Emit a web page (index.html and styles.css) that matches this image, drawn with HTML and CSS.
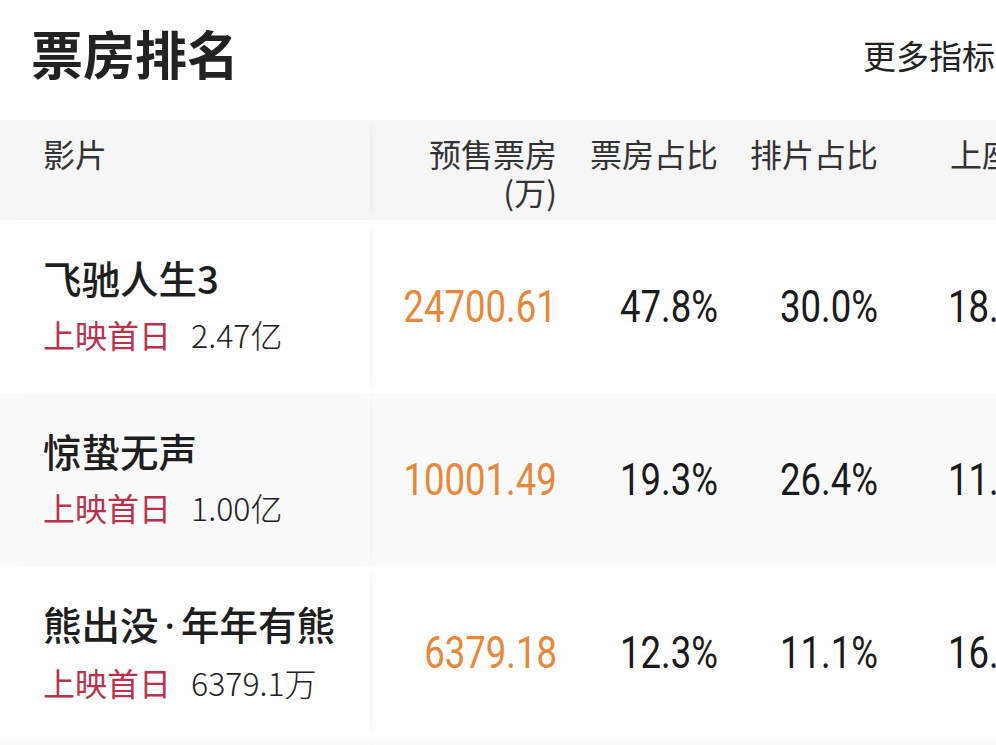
FILE: index.html
```html
<!DOCTYPE html>
<html lang="zh-CN">
<head>
<meta charset="utf-8">
<title>票房排名</title>
<link rel="stylesheet" href="styles.css">
</head>
<body>
<div class="page">
  <div class="topbar">
    <h1 class="title">票房排名</h1>
    <span class="more">更多指标 <span class="arrow">›</span></span>
  </div>
  <div class="table">
    <div class="row head">
      <div class="cell name">影片</div>
      <div class="cell num">预售票房<br>(万)</div>
      <div class="cell num">票房占比</div>
      <div class="cell num">排片占比</div>
      <div class="cell num">上座率</div>
    </div>
    <div class="row">
      <div class="cell name">
        <div class="film">飞驰人生3</div>
        <div class="sub"><span class="tag">上映首日</span><span class="val">2.47亿</span></div>
      </div>
      <div class="cell num digits orange"><span class="fig">24700.61</span></div>
      <div class="cell num digits"><span class="fig">47.8%</span></div>
      <div class="cell num digits"><span class="fig">30.0%</span></div>
      <div class="cell num digits"><span class="fig">18.5%</span></div>
    </div>
    <div class="row alt">
      <div class="cell name">
        <div class="film">惊蛰无声</div>
        <div class="sub"><span class="tag">上映首日</span><span class="val">1.00亿</span></div>
      </div>
      <div class="cell num digits orange"><span class="fig">10001.49</span></div>
      <div class="cell num digits"><span class="fig">19.3%</span></div>
      <div class="cell num digits"><span class="fig">26.4%</span></div>
      <div class="cell num digits"><span class="fig">11.2%</span></div>
    </div>
    <div class="row">
      <div class="cell name">
        <div class="film">熊出没<span class="dot">·</span>年年有熊</div>
        <div class="sub"><span class="tag">上映首日</span><span class="val">6379.1万</span></div>
      </div>
      <div class="cell num digits orange"><span class="fig">6379.18</span></div>
      <div class="cell num digits"><span class="fig">12.3%</span></div>
      <div class="cell num digits"><span class="fig">11.1%</span></div>
      <div class="cell num digits"><span class="fig">16.0%</span></div>
    </div>
    <div class="row alt">
      <div class="cell name"></div>
      <div class="cell num"></div>
      <div class="cell num"></div>
      <div class="cell num"></div>
      <div class="cell num"></div>
    </div>
  </div>
</div>
</body>
</html>
```
FILE: styles.css
```css
html, body {
  margin: 0;
  padding: 0;
  background: #ffffff;
  overflow: hidden;
}
body {
  width: 996px;
  height: 745px;
  font-family: "Noto Sans CJK SC", "Noto Sans", sans-serif;
  color: #1c1c1c;
}
.page {
  width: 1076px;
}
.topbar {
  height: 120px;
  display: flex;
  align-items: center;
  padding-left: 31px;
  box-sizing: border-box;
}
.title {
  margin: 0;
  font-size: 52px;
  font-weight: 700;
  line-height: 60px;
  color: #222222;
  margin-top: -14px;
}
.more {
  margin-left: 624px;
  margin-top: -10px;
  font-size: 33px;
  line-height: 40px;
  color: #222222;
  white-space: nowrap;
}
.arrow {
  color: #999999;
}
.table {
  display: flex;
  flex-direction: column;
}
.row {
  display: grid;
  grid-template-columns: 370px 217px 161px 160px 168px;
  height: 173px;
  background: #ffffff;
}
.row.alt {
  background: #fafafa;
}
.row.head {
  height: 100px;
  background: #f6f6f6;
}
.cell {
  box-sizing: border-box;
}
.cell.name {
  padding-left: 43px;
  padding-top: 33px;
  background: inherit;
  box-shadow: 6px 0 8px -6px rgba(0, 0, 0, 0.07);
  position: relative;
  z-index: 1;
}
.head .cell {
  padding-top: 14px;
  font-size: 32px;
  line-height: 38px;
  color: #333333;
  font-weight: 400;
}
.head .cell.name {
  padding-top: 14px;
}
.cell.num {
  padding-right: 30px;
  text-align: right;
  white-space: nowrap;
}
.digits {
  display: flex;
  align-items: center;
  justify-content: flex-end;
  font-family: Roboto, "DejaVu Sans Condensed", sans-serif;
  font-size: 44px;
  color: #1a1a1a;
  padding-top: 1px;
}
.fig {
  display: inline-block;
  transform: scaleX(0.83);
  transform-origin: right center;
}
.digits.orange {
  color: #e6873a;
}
.film {
  font-size: 38.5px;
  line-height: 48px;
  font-weight: 500;
  color: #1e1e1e;
  white-space: nowrap;
}
.dot {
  font-family: "Noto Sans", sans-serif;
  margin: 0 6px;
}
.sub {
  margin-top: 10px;
  font-size: 32px;
  line-height: 46px;
  white-space: nowrap;
  display: flex;
  gap: 20px;
}
.tag {
  color: #b8324c;
  font-weight: 400;
}
.val {
  color: #222222;
  font-weight: 300;
}
```
